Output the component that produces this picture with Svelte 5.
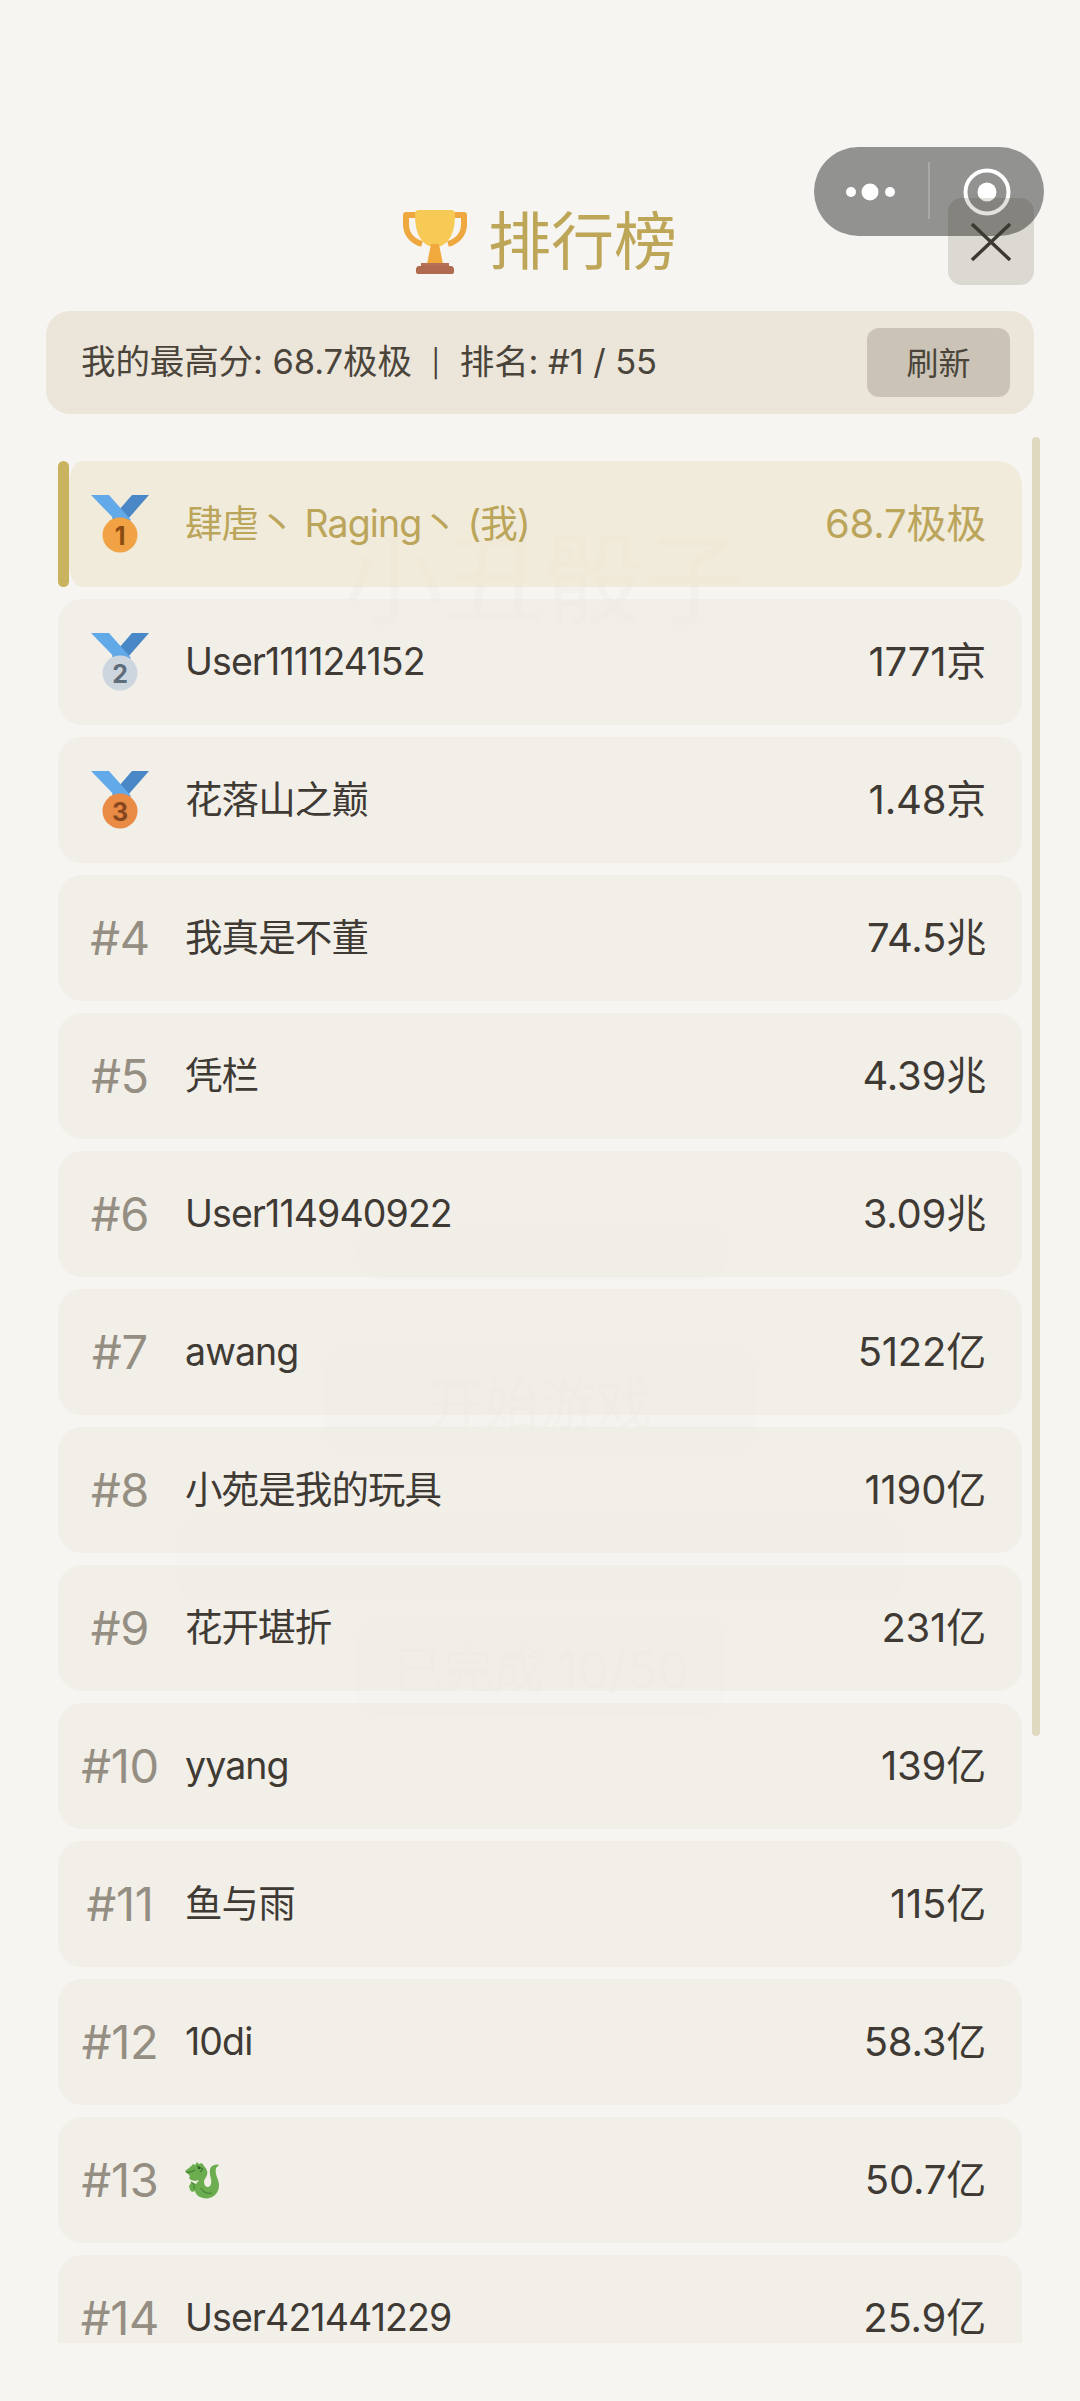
<script lang="ts">
  interface Entry {
    rank: number;
    name: string;
    score: string;
    me?: boolean;
  }

  const entries: Entry[] = [
    { rank: 1, name: '肆虐丶 Raging丶 (我)', score: '68.7极极', me: true },
    { rank: 2, name: 'User111124152', score: '1771京' },
    { rank: 3, name: '花落山之巅', score: '1.48京' },
    { rank: 4, name: '我真是不董', score: '74.5兆' },
    { rank: 5, name: '凭栏', score: '4.39兆' },
    { rank: 6, name: 'User114940922', score: '3.09兆' },
    { rank: 7, name: 'awang', score: '5122亿' },
    { rank: 8, name: '小苑是我的玩具', score: '1190亿' },
    { rank: 9, name: '花开堪折', score: '231亿' },
    { rank: 10, name: 'yyang', score: '139亿' },
    { rank: 11, name: '鱼与雨', score: '115亿' },
    { rank: 12, name: '10di', score: '58.3亿' },
    { rank: 13, name: '', score: '50.7亿' },
    { rank: 14, name: 'User421441229', score: '25.9亿' },
  ];

  const medals: Record<number, { disk: string; digit: string }> = {
    1: { disk: '#f0a244', digit: '#8a4c12' },
    2: { disk: '#cdd6de', digit: '#5f6c7a' },
    3: { disk: '#e98a45', digit: '#86471f' },
  };
</script>

<div class="page">
  <!-- the game menu shows faintly through the overlay -->
  <div class="ghost" aria-hidden="true">
    <span class="ghost__title">小丑骰子</span>
    <span class="ghost__btn ghost__btn--small"></span>
    <span class="ghost__btn ghost__btn--main">开始游戏</span>
    <span class="ghost__btn ghost__btn--wide"></span>
    <span class="ghost__btn ghost__btn--done">已完成 10/50</span>
  </div>

  <header class="title">
    <svg class="title__cup" viewBox="0 0 64 64" aria-hidden="true">
      <path d="M13 5H3v9c0 10 6 17 16 20M51 5h10v9c0 10-6 17-16 20" fill="none" stroke="#eea83f" stroke-width="6" stroke-linejoin="round" />
      <path d="M12 3c0-2 2-3 4-3h32c2 0 4 1 4 3 0 14-2 27-14 33H26C14 30 12 17 12 3z" fill="#f7ca56" />
      <path d="M28 34h8l4 20H24z" fill="#f1a93e" />
      <path d="M18 53h28v4H18z" fill="#b56f52" />
      <path d="M13 59c0-1 1-3 3-3h32c2 0 3 2 3 3v3c0 1-1 2-2 2H15c-1 0-2-1-2-2z" fill="#b06a50" />
    </svg>
    <h1 class="title__text">排行榜</h1>
  </header>

  <section class="summary">
    <span class="summary__text">我的最高分: 68.7极极<span class="summary__sep">|</span>排名: #1 / 55</span>
    <button type="button" class="summary__refresh">刷新</button>
  </section>

  <div class="board">
    <ul class="list">
      {#each entries as entry (entry.rank)}
        <li class="row" class:row--me={entry.me}>
          <div class="row__rank">
            {#if medals[entry.rank]}
              <svg class="medal" viewBox="0 0 58 58" aria-hidden="true">
                <path d="M58 0H41L21 23l9 9z" fill="#4a87c6" />
                <path d="M0 0h18l22 25-8 8z" fill="#62a9ea" />
                <circle cx="29" cy="40" r="17.5" fill={medals[entry.rank].disk} />
                <text x="29" y="49.5" text-anchor="middle" class="medal__digit" fill={medals[entry.rank].digit}>{entry.rank}</text>
              </svg>
            {:else}
              #{entry.rank}
            {/if}
          </div>
          <div class="row__name">
            {#if entry.rank === 13}
              <svg class="dragon" viewBox="0 0 38 38" aria-hidden="true">
                <path d="M0 10C2 8 6 6 8 3l2 1 2-3 2 2 3-1 2 3c3 3 4 6 3 9-1 3-3 4-3 7 0 3 2 5 4 5s4-3 3-8c-1-4-2-9 0-12 2-2 5-3 8-2l-3 3c-1 3 0 7 2 12 2 6 1 11-3 15-3 3-8 4-12 3-4-1-7-3-8-7l-3 1-2-2-1-4 2-3h3l2 1 3-4-4 1-4-1-2-2 1-2z" fill="#6cae4f" />
                <path d="M1 11c3 1 6 0 9-2M12 5l6 3M18 8l-3 3" fill="none" stroke="#3f7a33" stroke-width="1.3" />
                <path d="M6 21c2 1 4 3 3 7M16 27c2 4 6 6 11 5" fill="none" stroke="#4a8a3a" stroke-width="1.3" />
                <circle cx="14" cy="7" r="1.3" fill="#2d5c27" />
              </svg>
            {:else}
              {entry.name}
            {/if}
          </div>
          <div class="row__score">{entry.score}</div>
        </li>
      {/each}
    </ul>
    <span class="scrollbar"></span>
  </div>

  <button type="button" class="close" aria-label="关闭">
    <svg viewBox="0 0 40 38" aria-hidden="true">
      <path d="M1 1l38 36M39 1L1 37" fill="none" stroke="#3c3933" stroke-width="3.4" />
    </svg>
  </button>

  <div class="capsule">
    <svg class="capsule__icon" viewBox="0 0 230 89" aria-hidden="true">
      <circle cx="37" cy="45" r="5" fill="#fff" />
      <circle cx="56" cy="45" r="8.5" fill="#fff" />
      <circle cx="76" cy="45" r="5" fill="#fff" />
      <path d="M115 15v57" stroke="#fff" stroke-opacity="0.28" stroke-width="1.5" />
      <circle cx="173" cy="45" r="21.5" fill="none" stroke="#fff" stroke-width="4" />
      <circle cx="173" cy="45" r="9.5" fill="#fff" />
    </svg>
  </div>
</div>

<style>
  :global(body) {
    background: #f7f5f1;
  }

  .page {
    position: relative;
    height: 2401px;
    overflow: hidden;
    font-family: Inter, "Noto Sans CJK SC", sans-serif;
    color: #3f3a34;
    padding-top: 209px;
    box-sizing: border-box;
  }

  .ghost {
    position: absolute;
    inset: 0;
    color: rgba(120, 105, 70, 0.028);
  }
  .ghost__title {
    position: absolute;
    left: 344px;
    top: 525px;
    font-size: 100px;
    line-height: 1.1;
  }
  .ghost__btn {
    position: absolute;
    display: flex;
    align-items: center;
    justify-content: center;
    background: rgba(120, 105, 70, 0.01);
    border-radius: 24px;
    font-size: 56px;
    color: rgba(120, 105, 70, 0.018);
  }
  .ghost__btn--small {
    left: 357px;
    top: 1226px;
    width: 371px;
    height: 54px;
  }
  .ghost__btn--main {
    left: 325px;
    top: 1345px;
    width: 430px;
    height: 110px;
  }
  .ghost__btn--wide {
    left: 176px;
    top: 1517px;
    width: 728px;
    height: 83px;
  }
  .ghost__btn--done {
    left: 357px;
    top: 1616px;
    width: 368px;
    height: 100px;
    font-size: 50px;
  }

  .title {
    position: relative;
    display: flex;
    justify-content: center;
    align-items: center;
    gap: 21px;
    height: 65px;
  }
  .title__cup {
    width: 64px;
    height: 64px;
  }
  .title__text {
    margin: 0;
    color: #bea658;
    font-size: 63px;
    font-weight: 400;
    line-height: 65px;
  }

  .summary {
    position: relative;
    display: flex;
    align-items: center;
    justify-content: space-between;
    height: 103px;
    margin: 37px 46px 0;
    padding: 0 24px 0 35px;
    background: #ece6da;
    border-radius: 24px;
  }
  .summary__text {
    font-size: 34.5px;
    line-height: 40px;
    letter-spacing: -0.1px;
    color: #4a443a;
  }
  .summary__sep {
    display: inline-block;
    width: 48px;
    text-align: center;
    font-size: 27px;
    vertical-align: 1px;
  }
  .summary__refresh {
    width: 143px;
    height: 69px;
    padding: 0 0 3px;
    border: 0;
    border-radius: 12px;
    background: #cbc4b6;
    color: #4a443a;
    font-family: inherit;
    font-size: 32px;
  }

  .board {
    position: absolute;
    left: 0;
    right: 0;
    top: 437px;
    height: 1906px;
    overflow: hidden;
  }
  .list {
    display: flex;
    flex-direction: column;
    gap: 12px;
    margin: 0;
    padding: 24px 58px 0;
    list-style: none;
  }

  .row {
    position: relative;
    display: flex;
    flex: none;
    align-items: center;
    gap: 25px;
    height: 126px;
    padding: 0 36px 0 22px;
    background: rgba(232, 227, 218, 0.32);
    border-radius: 24px;
  }
  .row--me {
    padding-left: 11px;
    border-left: 11px solid transparent;
    background: rgba(236, 226, 200, 0.55);
    background-clip: padding-box;
    color: #bba55a;
  }
  .row--me::before {
    content: '';
    position: absolute;
    left: -11px;
    top: 0;
    bottom: 0;
    width: 11px;
    border-radius: 6px;
    background: #c9b35f;
  }

  .row__rank {
    flex: none;
    width: 80px;
    display: flex;
    justify-content: center;
    color: #958e82;
    font-size: 47px;
    line-height: 52px;
    letter-spacing: -0.3px;
  }
  .row__name {
    flex: 1;
    min-width: 0;
    font-size: 37.5px;
    line-height: 44px;
    letter-spacing: -0.9px;
    white-space: nowrap;
  }
  .row__score {
    flex: none;
    font-size: 40px;
    line-height: 44px;
    letter-spacing: -0.2px;
  }

  .medal {
    width: 58px;
    height: 58px;
  }
  .medal__digit {
    font-family: Inter, sans-serif;
    font-size: 25px;
    font-weight: 700;
  }
  .dragon {
    display: block;
    width: 38px;
    height: 38px;
  }

  .scrollbar {
    position: absolute;
    left: 1032px;
    top: 0;
    width: 8px;
    height: 1299px;
    border-radius: 4px;
    background: #dfd9c0;
  }

  .capsule {
    position: absolute;
    left: 814px;
    top: 147px;
    width: 230px;
    height: 89px;
    border-radius: 45px;
    background: #929290;
  }
  .capsule__icon {
    display: block;
    width: 100%;
    height: 100%;
  }

  .close {
    position: absolute;
    z-index: 1;
    left: 948px;
    top: 198px;
    width: 86px;
    height: 87px;
    padding: 0;
    display: flex;
    align-items: center;
    justify-content: center;
    border: 0;
    border-radius: 14px;
    background: rgba(60, 45, 20, 0.14);
  }
  .close svg {
    width: 40px;
    height: 38px;
  }
</style>
